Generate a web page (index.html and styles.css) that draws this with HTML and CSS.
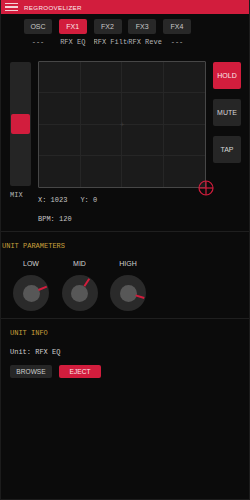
FILE: index.html
```html
<!DOCTYPE html>
<html>
<head>
<meta charset="utf-8">
<link rel="stylesheet" href="styles.css">
</head>
<body>
<div class="app">
  <header class="topbar">
    <div class="burger"><span></span><span></span><span></span></div>
    <div class="title">REGROOVELIZER</div>
  </header>

  <nav class="tabs">
    <div class="tab">OSC</div>
    <div class="tab active">FX1</div>
    <div class="tab">FX2</div>
    <div class="tab">FX3</div>
    <div class="tab">FX4</div>
  </nav>
  <div class="labels">
    <div class="lbl"><span>---</span></div>
    <div class="lbl"><span>RFX EQ</span></div>
    <div class="lbl"><span>RFX Filter</span></div>
    <div class="lbl"><span>RFX Reverb</span></div>
    <div class="lbl"><span>---</span></div>
  </div>

  <section class="main">
    <div class="mixcol">
      <div class="slider"><div class="thumb"></div></div>
      <div class="mixlbl">MIX</div>
    </div>
    <div class="padcol">
      <div class="pad">
        <div class="grid">
          <div></div><div></div><div></div><div></div>
          <div></div><div></div><div></div><div></div>
          <div></div><div></div><div></div><div></div>
          <div></div><div></div><div></div><div></div>
        </div>
        <div class="center">+</div>
        <svg class="cursor" width="16" height="16" viewBox="0 0 16 16">
          <circle cx="8" cy="8" r="7" fill="none" stroke="#d21d3d" stroke-width="1.2"/>
          <line x1="1" y1="8" x2="15" y2="8" stroke="#d21d3d" stroke-width="1.2"/>
          <line x1="8" y1="1" x2="8" y2="15" stroke="#d21d3d" stroke-width="1.2"/>
        </svg>
      </div>
      <div class="coords"><span>X: 1023</span><span>Y: 0</span></div>
      <div class="bpm">BPM: 120</div>
    </div>
    <div class="btncol">
      <div class="sbtn active">HOLD</div>
      <div class="sbtn">MUTE</div>
      <div class="sbtn">TAP</div>
    </div>
  </section>

  <section class="params">
    <div class="heading unitp">UNIT PARAMETERS</div>
    <div class="knobs">
      <div class="knobwrap">
        <div class="klbl">LOW</div>
        <div class="knob"><div class="inner"></div><div class="ind" style="transform: rotate(68deg)"></div></div>
      </div>
      <div class="knobwrap">
        <div class="klbl">MID</div>
        <div class="knob"><div class="inner"></div><div class="ind" style="transform: rotate(33deg)"></div></div>
      </div>
      <div class="knobwrap">
        <div class="klbl">HIGH</div>
        <div class="knob"><div class="inner"></div><div class="ind" style="transform: rotate(107deg)"></div></div>
      </div>
    </div>
  </section>

  <section class="info">
    <div class="heading">UNIT INFO</div>
    <div class="unit">Unit: RFX EQ</div>
    <div class="actions">
      <div class="abtn">BROWSE</div>
      <div class="abtn red">EJECT</div>
    </div>
  </section>
</div>
</body>
</html>
```

FILE: styles.css
```css
* { box-sizing: border-box; }
html, body {
  margin: 0;
  padding: 0;
  background: #0b0b0b;
}
body {
  font-family: "Liberation Sans", Arial, sans-serif;
  color: #cfcfcf;
}
.app {
  width: 250px;
  height: 500px;
  border: 1px solid #1c1c1c;
  border-top: none;
  background: #0b0b0b;
  overflow: hidden;
}
.topbar {
  height: 14px;
  background: #d21d3d;
  display: flex;
  align-items: center;
  padding-left: 4px;
}
.burger {
  width: 13px;
  display: flex;
  flex-direction: column;
  gap: 2px;
}
.burger span {
  display: block;
  height: 1.5px;
  background: #f3d0d6;
}
.title {
  margin-left: 6px;
  font-size: 6.2px;
  color: #fbe9ec;
  letter-spacing: 0.35px;
}
.tabs {
  display: flex;
  gap: 6.75px;
  padding-left: 23px;
  margin-top: 5px;
}
.tab {
  width: 28px;
  height: 15px;
  background: #282828;
  border-radius: 2px;
  font-size: 7px;
  color: #c8c8c8;
  display: flex;
  align-items: center;
  justify-content: center;
}
.tab.active {
  background: #d21d3d;
  color: #fbe6ea;
}
.labels {
  display: flex;
  gap: 0.75px;
  padding-left: 23px;
  margin-top: 4px;
  height: 8px;
}
.lbl {
  width: 34px;
  flex: none;
  overflow: hidden;
  font-family: "Liberation Mono", monospace;
  font-size: 7px;
  line-height: 8px;
  color: #b4b4b4;
  white-space: nowrap;
}
.lbl span {
  display: block;
  width: 28px;
  text-align: center;
}
.main {
  display: flex;
  margin-top: 15px;
  padding-left: 9px;
}
.mixcol {
  width: 21px;
  padding-top: 1px;
}
.slider {
  height: 124px;
  background: #252525;
  border-radius: 2px;
  padding: 52px 1px 0 1px;
}
.thumb {
  height: 20px;
  background: #d21d3d;
  border-radius: 2px;
}
.mixlbl {
  margin-top: 5px;
  font-family: "Liberation Mono", monospace;
  font-size: 7px;
  color: #b4b4b4;
}
.padcol {
  margin-left: 7px;
  width: 168px;
}
.pad {
  position: relative;
  height: 127px;
  border: 1px solid #474747;
  background: #1b1b1b;
  border-radius: 1px;
}
.grid {
  display: grid;
  grid-template-columns: repeat(4, 1fr);
  grid-template-rows: repeat(4, 1fr);
  height: 100%;
}
.grid div {
  border-right: 1px solid #262626;
  border-bottom: 1px solid #262626;
}
.grid div:nth-child(4n) { border-right: none; }
.grid div:nth-child(n+13) { border-bottom: none; }
.center {
  position: absolute;
  left: 50%;
  top: 50%;
  transform: translate(-50%, -52%);
  font-size: 8px;
  color: #3e3e3e;
}
.cursor {
  position: absolute;
  right: -9px;
  bottom: -9px;
}
.coords {
  margin-top: 8px;
  display: flex;
  gap: 13px;
  font-family: "Liberation Mono", monospace;
  font-size: 7px;
  color: #c4c4c4;
}
.bpm {
  margin-top: 11px;
  font-family: "Liberation Mono", monospace;
  font-size: 7px;
  color: #c4c4c4;
}
.btncol {
  margin-left: 7px;
  padding-top: 1px;
  display: flex;
  flex-direction: column;
  gap: 10px;
}
.sbtn {
  width: 28px;
  height: 27px;
  background: #262626;
  border-radius: 2px;
  font-size: 7px;
  color: #d6d6d6;
  display: flex;
  align-items: center;
  justify-content: center;
}
.sbtn.active {
  background: #d21d3d;
  color: #fbe6ea;
}
.params {
  margin-top: 8px;
  border-top: 1px solid #1f1f1f;
  border-bottom: 1px solid #1f1f1f;
  height: 88px;
}
.heading {
  font-family: "Liberation Mono", monospace;
  font-size: 7px;
  color: #c9a03c;
}
.unitp {
  margin-top: 10px;
  padding-left: 1px;
}
.knobs {
  display: flex;
  gap: 12.5px;
  padding-left: 12px;
  margin-top: 10px;
}
.knobwrap {
  width: 36px;
  display: flex;
  flex-direction: column;
  align-items: center;
}
.klbl {
  font-size: 7px;
  color: #d2d2d2;
  height: 8px;
  line-height: 8px;
}
.knob {
  position: relative;
  margin-top: 7px;
  width: 36px;
  height: 36px;
  border-radius: 50%;
  background: #2a2a2a;
  display: flex;
  align-items: center;
  justify-content: center;
}
.inner {
  width: 17px;
  height: 17px;
  border-radius: 50%;
  background: #575757;
}
.ind {
  position: absolute;
  left: 17px;
  top: 1px;
  width: 2px;
  height: 9px;
  background: #d21d3d;
  transform-origin: 1px 17px;
}
.info {
  padding-left: 9px;
}
.info .heading {
  margin-top: 10px;
}
.unit {
  margin-top: 11px;
  font-family: "Liberation Mono", monospace;
  font-size: 7px;
  color: #cfcfcf;
}
.actions {
  display: flex;
  gap: 7px;
  margin-top: 9px;
}
.abtn {
  width: 42px;
  height: 13px;
  border-radius: 2px;
  background: #262626;
  color: #cfcfcf;
  font-size: 6.6px;
  display: flex;
  align-items: center;
  justify-content: center;
}
.abtn.red {
  background: #d21d3d;
  color: #fbe6ea;
}
```
